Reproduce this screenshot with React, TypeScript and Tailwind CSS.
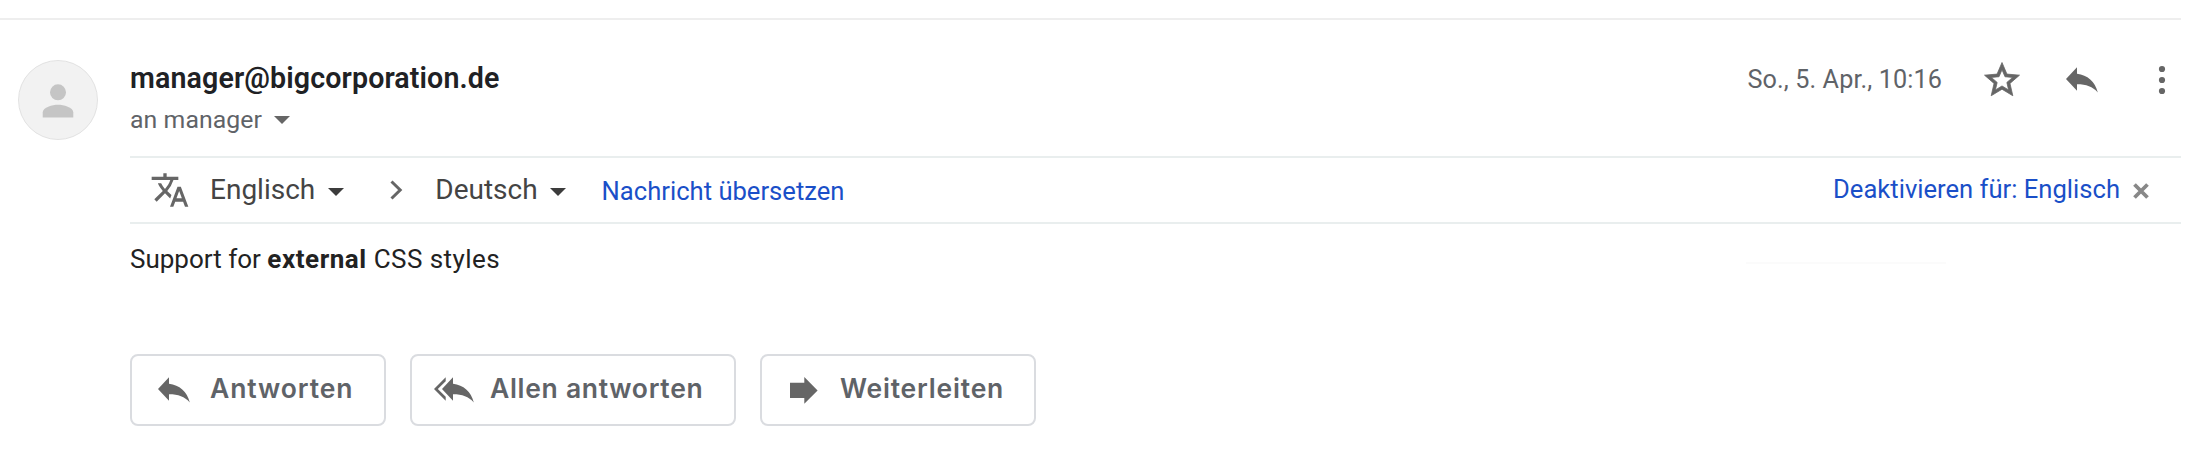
import type { ReactNode } from 'react';
import { MdTranslate } from 'react-icons/md';

const REPLY_PATH = 'M11 .3V6.7C21.5 8 29 14.5 31.8 25.4C26.5 19.6 20.5 17.3 11 17.3V23.7L0 12Z';

function Caret({ className }: { className: string }) {
  return (
    <svg width="16" height="8" viewBox="0 0 16 8" fill="currentColor" className={`shrink-0 ${className}`}>
      <path d="M0 0H16L8 8Z" />
    </svg>
  );
}

function StarIcon() {
  return (
    <svg width="42" height="42" viewBox="0 0 24 24" fill="#666" stroke="#666" strokeWidth="0.45" className="mr-[43px] shrink-0">
      <path d="M22 9.24l-7.19-.62L12 2 9.19 8.63 2 9.24l5.46 4.73L5.82 21 12 17.27 18.18 21l-1.63-7.03L22 9.24zM12 15.4l-3.76 2.27 1-4.28-3.32-2.88 4.38-.38L12 6.1l1.71 4.04 4.38.38-3.32 2.88 1 4.28L12 15.4z" />
    </svg>
  );
}

function ReplyIcon() {
  return (
    <svg width="32" height="26" viewBox="0 0 32 26" fill="currentColor" className="shrink-0 text-[#666]">
      <path d={REPLY_PATH} />
    </svg>
  );
}

function ReplyAllIcon() {
  return (
    <svg width="40" height="26" viewBox="0 0 40 26" fill="currentColor" className="shrink-0 text-[#666]">
      <path d={REPLY_PATH} transform="translate(8 0)" />
      <path d="M11.7 .3V4.3L3.8 12L11.7 19.7V23.7L0 12Z" />
    </svg>
  );
}

function ForwardIcon() {
  return (
    <svg width="28" height="27" viewBox="0 0 28 27" fill="currentColor" className="shrink-0 text-[#666]">
      <path d="M0 5.8H14.3V0L27.6 13.4L14.3 26.8V21H0Z" />
    </svg>
  );
}

function ActionButton({ className, children }: { className: string; children: ReactNode }) {
  return (
    <button
      className={`flex h-[72px] items-center rounded-[8px] border-2 border-[#dadce0] font-['Inter',sans-serif] text-[26.5px] leading-[34px] font-semibold whitespace-nowrap text-[#5f6368] ${className}`}
    >
      {children}
    </button>
  );
}

export default function App() {
  return (
    <div className="h-[450px] w-full overflow-hidden bg-white pt-[18px] font-['Roboto',sans-serif]">
      <main className="w-[2181px] border-t-2 border-[#eeeeee]">
        <header className="flex h-[136px] pl-[18px]">
          <div className="mt-[40px] size-[80px] shrink-0">
            <svg width="80" height="80" viewBox="0 0 80 80">
              <circle cx="40" cy="40" r="39.5" fill="#f2f2f2" stroke="#e2e2e2" />
              <circle cx="40" cy="32.3" r="8" fill="#c5c5c5" />
              <path d="M24.7 57.5V52.5C24.7 47.3 34.5 44.8 40 44.8S55.3 47.3 55.3 52.5V57.5Z" fill="#c5c5c5" />
            </svg>
          </div>
          <div className="ml-[32px] grow pt-[40px]">
            <div className="text-[28.6px] leading-[37px] font-semibold tracking-[0.12px] text-[#202124]">manager@bigcorporation.de</div>
            <div className="mt-[7px] flex items-center text-[24.8px] leading-[31px] tracking-[0.08px] text-[#5f6368]">
              an manager
              <Caret className="ml-[12px] text-[#666]" />
            </div>
          </div>
          <div className="flex h-[120px] items-center">
            <span className="mr-[39px] text-[25.2px] leading-[30px] tracking-[0.11px] text-[#5f6368]">So., 5. Apr., 10:16</span>
            <StarIcon />
            <ReplyIcon />
            <svg width="8" height="30" viewBox="0 0 8 30" fill="#666" className="mr-[15px] ml-[60px]">
              <circle cx="4" cy="4" r="3.1" />
              <circle cx="4" cy="15" r="3.1" />
              <circle cx="4" cy="26" r="3.1" />
            </svg>
          </div>
        </header>

        <section className="ml-[130px] flex h-[68px] items-center border-y-2 border-[#e9eeee] text-[28px] leading-[34px] text-[#444]">
          <MdTranslate className="ml-[20px] size-[40px] text-[#666]" />
          <span className="ml-[20px]">Englisch</span>
          <Caret className="mt-[3px] ml-[13px] text-[#3c3c3c]" />
          <svg width="13" height="20" viewBox="0 0 13 20" fill="none" stroke="#666" strokeWidth="3" className="ml-[46px]">
            <path d="M1.5 1.5L10.2 10L1.5 18.5" />
          </svg>
          <span className="ml-[32px]">Deutsch</span>
          <Caret className="mt-[3px] ml-[12px] text-[#3c3c3c]" />
          <span className="mt-[2px] ml-[36px] text-[25.6px] text-[#1a4fc8]">Nachricht übersetzen</span>
          <span className="mb-[3px] ml-auto text-[25.6px] text-[#1a4fc8]">Deaktivieren für: Englisch</span>
          <svg width="16" height="16" viewBox="0 0 16 16" stroke="#888" strokeWidth="3.8" className="mt-[2px] mr-[32px] ml-[13px]">
            <path d="M1.5 1.5L14.5 14.5M14.5 1.5L1.5 14.5" />
          </svg>
        </section>

        <section className="ml-[130px] flex h-[130px] items-start justify-between pt-[18px]">
          <p className="text-[26px] leading-[34px] text-[#222]">
            Support for <b className="font-bold tracking-[0.55px]">external</b>
            <span className="tracking-[0.45px]"> CSS styles</span>
          </p>
          <div className="mt-[20px] mr-[235px] h-[2px] w-[200px] bg-[#fbfbfb]" />
        </section>

        <footer className="ml-[130px] flex">
          <ActionButton className="w-[256px] pl-[26px]">
            <ReplyIcon />
            <span className="mb-[4px] ml-[20px] tracking-[0.9px]">Antworten</span>
          </ActionButton>
          <ActionButton className="ml-[24px] w-[326px] pl-[22px]">
            <ReplyAllIcon />
            <span className="mb-[4px] ml-[16px] tracking-[0.7px]">Allen antworten</span>
          </ActionButton>
          <ActionButton className="ml-[24px] w-[276px] pl-[28px]">
            <ForwardIcon />
            <span className="mb-[4px] ml-[22px] tracking-[0.8px]">Weiterleiten</span>
          </ActionButton>
        </footer>
      </main>
    </div>
  );
}
